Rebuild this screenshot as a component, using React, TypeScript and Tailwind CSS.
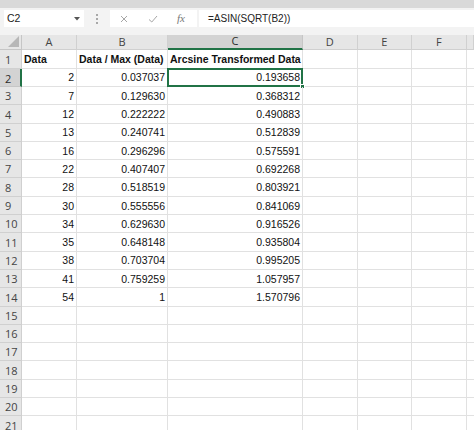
import React from "react";

const rows: [string, string, string][] = [
  ["2", "0.037037", "0.193658"],
  ["7", "0.129630", "0.368312"],
  ["12", "0.222222", "0.490883"],
  ["13", "0.240741", "0.512839"],
  ["16", "0.296296", "0.575591"],
  ["22", "0.407407", "0.692268"],
  ["28", "0.518519", "0.803921"],
  ["30", "0.555556", "0.841069"],
  ["34", "0.629630", "0.916526"],
  ["35", "0.648148", "0.935804"],
  ["38", "0.703704", "0.995205"],
  ["41", "0.759259", "1.057957"],
  ["54", "1", "1.570796"],
];

const cols = ["A", "B", "C", "D", "E", "F", ""];

function FormulaBar() {
  return (
    <div className="h-[27px] bg-[#f3f3f3] flex items-start pt-[2px]">
      {/* name box */}
      <div className="ml-1 w-[80px] h-[17px] bg-white flex items-center justify-between pl-[3px] pr-[4px] text-[10.5px] text-[#222]">
        <span>C2</span>
        <svg width="6" height="4" viewBox="0 0 6 4">
          <path d="M0 0 L6 0 L3 3.5 Z" fill="#555" />
        </svg>
      </div>
      <div className="w-[26px] h-[17px] flex flex-col items-center justify-center gap-[2px]">
        <span className="w-[2px] h-[2px] bg-[#a8a8a8]" />
        <span className="w-[2px] h-[2px] bg-[#a8a8a8]" />
        <span className="w-[2px] h-[2px] bg-[#a8a8a8]" />
      </div>
      <div className="w-[87px] h-[17px] bg-white flex items-center">
        <svg className="ml-[10px]" width="8" height="8" viewBox="0 0 8 8">
          <path d="M1 1 L7 7 M7 1 L1 7" stroke="#a6a6a6" strokeWidth="1" />
        </svg>
        <svg className="ml-[20px]" width="10" height="8" viewBox="0 0 10 8">
          <path d="M1 4.5 L3.8 7 L9 1" stroke="#a6a6a6" strokeWidth="1" fill="none" />
        </svg>
        <span className="ml-[19px] text-[11px] italic text-[#777] font-['Liberation_Serif',serif]">
          fx
        </span>
      </div>
      <div className="ml-[2px] flex-1 h-[17px] bg-white flex items-center pl-[9px] text-[10px] text-[#222]">
        =ASIN(SQRT(B2))
      </div>
    </div>
  );
}

export default function App() {
  return (
    <div className="w-[474px] h-[430px] overflow-hidden bg-white font-['Liberation_Sans',Arial,sans-serif]">
      <div className="h-2 bg-[#d9d9d9]" />
      <FormulaBar />
      <div className="grid grid-cols-[22px_55px_91px_135px_54.5px_54.5px_54.5px_1fr]">
        {/* column headers */}
        <div className="h-[15.4px] bg-[#e6e6e6] border-r border-b border-[#c6c6c6] flex items-end justify-end p-[2px]">
          <svg width="11" height="11" viewBox="0 0 11 11">
            <path d="M11 0 L11 11 L0 11 Z" fill="#b7b7b7" />
          </svg>
        </div>
        {cols.map((c, i) =>
          c === "C" ? (
            <div
              key={i}
              className="h-[15.4px] bg-[#d3d3d3] border-r border-[#c6c6c6] border-b-2 border-b-[#217346] flex items-center justify-center text-[11px] text-[#2b2b2b] font-['Open_Sans',sans-serif]"
            >
              {c}
            </div>
          ) : (
            <div
              key={i}
              className="h-[15.4px] bg-[#e6e6e6] border-r border-b border-[#d0d0d0] flex items-center justify-center text-[11px] text-[#444] font-['Open_Sans',sans-serif]"
            >
              {c}
            </div>
          )
        )}
        {Array.from({ length: 21 }, (_, r) => {
          const n = r + 1;
          const sel = n === 2;
          const data = n >= 2 && n <= 14 ? rows[n - 2] : null;
          return (
            <React.Fragment key={n}>
              <div
                className={
                  sel
                    ? "h-[18.3px] bg-[#d3d3d3] border-b border-[#c6c6c6] border-r-2 border-r-[#217346] flex items-end pl-[5px] pb-[1px] text-[11px] text-[#2b2b2b] font-['Open_Sans',sans-serif] leading-none"
                    : "h-[18.3px] bg-[#e6e6e6] border-b border-r border-[#d0d0d0] flex items-end pl-[5px] pb-[2px] text-[11px] text-[#444] font-['Open_Sans',sans-serif] leading-none"
                }
              >
                <span className="pb-[1px]">{n}</span>
              </div>
              {n === 1 ? (
                <>
                  <div className="h-[18.3px] border-r border-b border-[#e1e1e1] flex items-end px-[2px] pb-[3px] text-[10.5px] font-bold text-[#111] leading-none">
                    Data
                  </div>
                  <div className="h-[18.3px] border-r border-b border-[#e1e1e1] flex items-end px-[2px] pb-[3px] text-[10.5px] font-bold text-[#111] leading-none whitespace-nowrap">
                    Data / Max (Data)
                  </div>
                  <div className="h-[18.3px] border-r border-b border-[#e1e1e1] flex items-end px-[2px] pb-[3px] text-[10.5px] font-bold text-[#111] leading-none whitespace-nowrap">
                    Arcsine Transformed Data
                  </div>
                </>
              ) : (
                <>
                  <div className="h-[18.3px] border-r border-b border-[#e1e1e1] flex items-end justify-end px-[2px] pb-[3px] text-[10.5px] text-[#111] leading-none">
                    {data ? data[0] : ""}
                  </div>
                  <div className="h-[18.3px] border-r border-b border-[#e1e1e1] flex items-end justify-end px-[2px] pb-[3px] text-[10.5px] text-[#111] leading-none">
                    {data ? data[1] : ""}
                  </div>
                  <div className="relative h-[18.3px] border-r border-b border-[#e1e1e1] flex items-end justify-end px-[2px] pb-[3px] text-[10.5px] text-[#111] leading-none">
                    {data ? data[2] : ""}
                    {sel && (
                      <>
                        <div className="absolute -left-px -top-px -right-px -bottom-px border-2 border-[#217346]" />
                        <div className="absolute -right-[3px] -bottom-[3px] w-[5px] h-[5px] bg-[#217346] border border-white" />
                      </>
                    )}
                  </div>
                </>
              )}
              <div className="h-[18.3px] border-r border-b border-[#e1e1e1]" />
              <div className="h-[18.3px] border-r border-b border-[#e1e1e1]" />
              <div className="h-[18.3px] border-r border-b border-[#e1e1e1]" />
              <div className="h-[18.3px] border-b border-[#e1e1e1]" />
            </React.Fragment>
          );
        })}
      </div>
    </div>
  );
}
